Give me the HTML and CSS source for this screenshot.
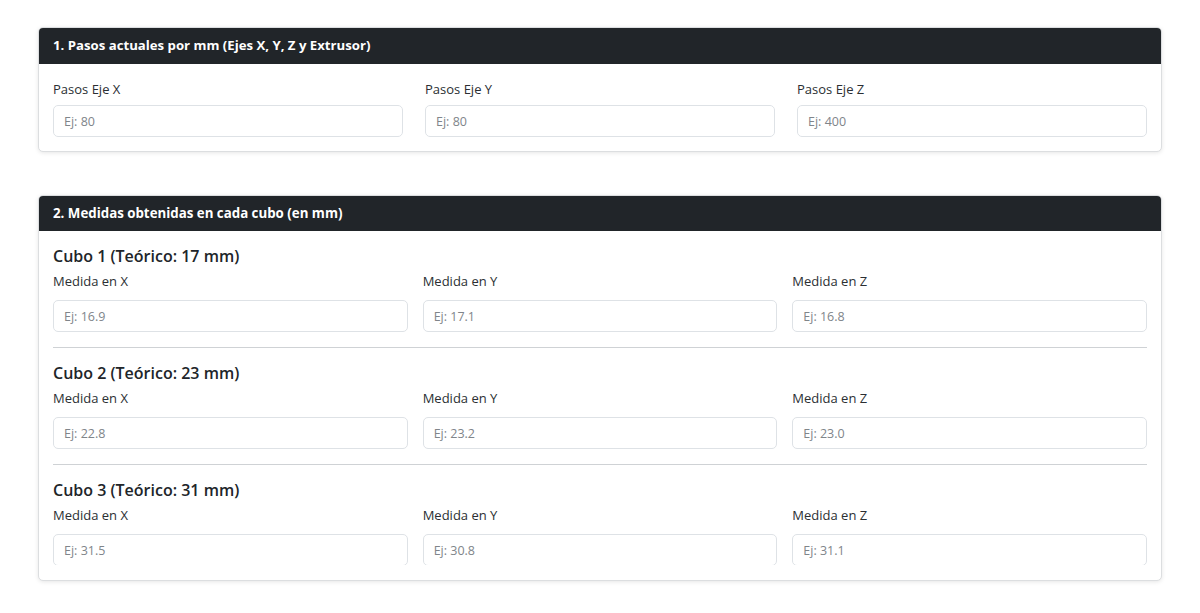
FILE: index.html
```html
<!DOCTYPE html>
<html lang="es">
<head>
<meta charset="utf-8">
<title>Calibración</title>
<link rel="stylesheet" href="styles.css">
</head>
<body>
<div class="page">
  <section class="card">
    <div class="card-header">1. Pasos actuales por mm (Ejes X, Y, Z y Extrusor)</div>
    <div class="card-body body-1">
      <div class="row row-steps">
        <div class="field"><label class="form-label">Pasos Eje X</label><input class="form-control" placeholder="Ej: 80"></div>
        <div class="field"><label class="form-label">Pasos Eje Y</label><input class="form-control" placeholder="Ej: 80"></div>
        <div class="field"><label class="form-label">Pasos Eje Z</label><input class="form-control" placeholder="Ej: 400"></div>
      </div>
    </div>
  </section>

  <section class="card">
    <div class="card-header header-2">2. Medidas obtenidas en cada cubo (en mm)</div>
    <div class="card-body">
      <div class="scroll">
        <div class="cube">
          <h5 class="cube-title">Cubo 1 (Teórico: 17 mm)</h5>
          <div class="row row-cube">
            <div class="field"><label class="form-label">Medida en X</label><input class="form-control" placeholder="Ej: 16.9"></div>
            <div class="field"><label class="form-label">Medida en Y</label><input class="form-control" placeholder="Ej: 17.1"></div>
            <div class="field"><label class="form-label">Medida en Z</label><input class="form-control" placeholder="Ej: 16.8"></div>
          </div>
        </div>
        <hr class="sep">
        <div class="cube">
          <h5 class="cube-title">Cubo 2 (Teórico: 23 mm)</h5>
          <div class="row row-cube">
            <div class="field"><label class="form-label">Medida en X</label><input class="form-control" placeholder="Ej: 22.8"></div>
            <div class="field"><label class="form-label">Medida en Y</label><input class="form-control" placeholder="Ej: 23.2"></div>
            <div class="field"><label class="form-label">Medida en Z</label><input class="form-control" placeholder="Ej: 23.0"></div>
          </div>
        </div>
        <hr class="sep">
        <div class="cube">
          <h5 class="cube-title">Cubo 3 (Teórico: 31 mm)</h5>
          <div class="row row-cube">
            <div class="field"><label class="form-label">Medida en X</label><input class="form-control" placeholder="Ej: 31.5"></div>
            <div class="field"><label class="form-label">Medida en Y</label><input class="form-control" placeholder="Ej: 30.8"></div>
            <div class="field"><label class="form-label">Medida en Z</label><input class="form-control" placeholder="Ej: 31.1"></div>
          </div>
        </div>
      </div>
    </div>
  </section>
</div>
</body>
</html>
```

FILE: styles.css
```css
* { box-sizing: border-box; }
html, body { margin: 0; padding: 0; background: #fff; }
body {
  font-family: "Open Sans", "Noto Sans", "Liberation Sans", sans-serif;
  color: #212529;
}
.page {
  padding: 27px 38px 0 38px;
}
.card {
  background: #fff;
  border: 1px solid #dcdee0;
  border-radius: 5px;
  box-shadow: 0 1px 4px rgba(0,0,0,0.10);
  margin-bottom: 43px;
  overflow: hidden;
}
.card-header {
  background: #212529;
  color: #fff;
  font-weight: 700;
  font-size: 13.2px;
  height: 36px;
  line-height: 35px;
  padding: 0 14px;
}
.header-2 { font-size: 13.3px; height: 35px; line-height: 34px; }
.card-body {
  padding: 15px 14px;
}
.body-1 { padding-bottom: 14px; }
.row {
  display: grid;
  grid-template-columns: 1fr 1fr 1fr;
}
.row-steps { column-gap: 22px; }
.row-cube { column-gap: 15px; }
.field { display: flex; flex-direction: column; }
.form-label {
  font-size: 13px;
  line-height: 21px;
  height: 21px;
  margin-bottom: 5px;
  color: #2b2f33;
}
.row-cube .form-label { margin-bottom: 8px; }
.form-control {
  height: 32px;
  border: 1px solid #dee2e6;
  border-radius: 5px;
  padding: 0 10px;
  font-family: inherit;
  font-size: 12.5px;
  color: #212529;
  background: #fff;
  outline: none;
}
.form-control::placeholder { color: #80858a; }
.scroll {
  height: 319px;
  overflow: hidden;
}
.cube-title {
  margin: 0 0 5px 0;
  font-size: 16px;
  font-weight: 600;
  line-height: 20px;
  height: 20px;
  color: #212529;
}
.sep {
  border: 0;
  border-top: 1px solid #cfd2d5;
  margin: 15px 0 15px 0;
}
```
